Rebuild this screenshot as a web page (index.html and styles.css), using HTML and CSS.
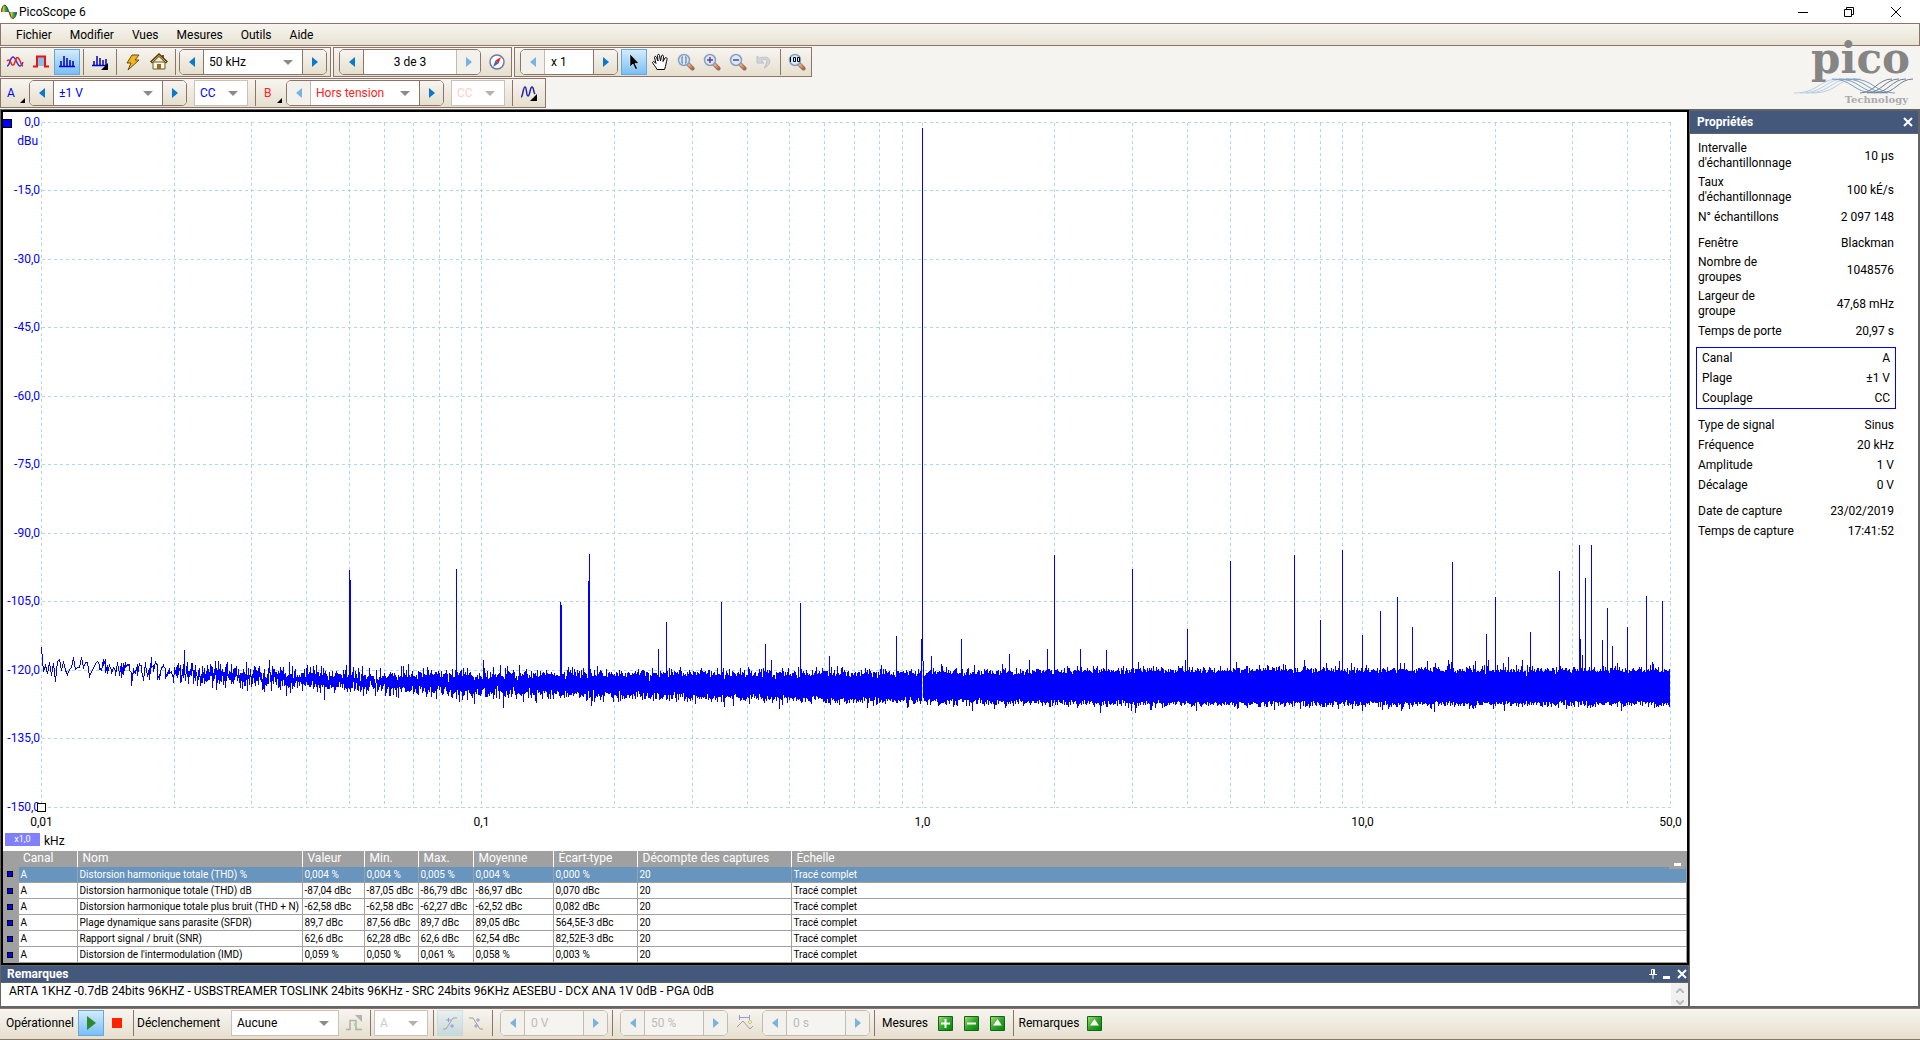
FILE: index.html
```
<!DOCTYPE html>
<html lang="fr">
<head>
    <meta charset="UTF-8">
    <meta name="viewport" content="width=device-width, initial-scale=1.0">
    <title>PicoScope 6</title>
    <link rel="stylesheet" href="styles.css">
</head>
<body>
    <!-- Shared icon shapes -->
    <svg class="defs" width="0" height="0" aria-hidden="true">
        <defs>
            <linearGradient id="handle" x1="0" y1="0" x2="1" y2="1">
                <stop offset="0" stop-color="#f7c27a"/>
                <stop offset="1" stop-color="#c8642a"/>
            </linearGradient>
            <linearGradient id="rainbow">
                <stop offset="0" stop-color="#d22"/>
                <stop offset=".3" stop-color="#cc3"/>
                <stop offset=".6" stop-color="#2a3"/>
                <stop offset="1" stop-color="#24c"/>
            </linearGradient>
            <linearGradient id="green" x1="0" y1="0" x2="1" y2="1">
                <stop offset="0" stop-color="#a4dd70"/>
                <stop offset=".5" stop-color="#2fa52a"/>
                <stop offset="1" stop-color="#008a00"/>
            </linearGradient>
            <symbol id="lens" viewBox="0 0 18 18">
                <path d="M10.500 10.500l5 5" stroke="#7b6a8c" stroke-width="4" stroke-linecap="round"/>
                <path d="M11 11l4.500 4.500" stroke="url(#handle)" stroke-width="2.500" stroke-linecap="round"/>
                <circle cx="7" cy="7" r="5.500" fill="#d3ecfb" stroke="#8a9dc0" stroke-width="1.500"/>
            </symbol>
            <symbol id="left" viewBox="0 0 6 10"><path d="M6 0v10L0 5z" fill="currentColor"/></symbol>
            <symbol id="right" viewBox="0 0 6 10"><path d="M0 0v10l6-5z" fill="currentColor"/></symbol>
            <symbol id="box" viewBox="0 0 15 15">
                <rect x="0" y="0" width="15" height="15" rx="1" fill="#12641a"/>
                <rect x="1" y="1" width="13" height="13" fill="url(#green)"/>
            </symbol>
        </defs>
    </svg>

    <header class="titlebar">
        <svg class="app-icon" viewBox="0 0 16 16" width="16" height="16">
            <path d="M0 8C1 1 3 0 4.500 1S7 5 8 8z" fill="url(#rainbow)"/>
            <path d="M8 8c1 6 2.500 8 4 7s3-3 4-7z" fill="url(#rainbow)"/>
            <path d="M0 8C2-1 5-1 8 8s6 8 8 0" fill="none" stroke="#333" stroke-width=".8"/>
        </svg>
        <h1>PicoScope 6</h1>
        <div class="window-buttons">
            <button aria-label="Réduire"><svg width="10" height="10"><path d="M0 5.500h10" stroke="#000"/></svg></button>
            <button aria-label="Restaurer"><svg width="10" height="10" fill="none" stroke="#000"><path d="M.5 2.500h7v7h-7zM2.500 2V.5h7v7H8"/></svg></button>
            <button aria-label="Fermer"><svg width="10" height="10" stroke="#000"><path d="M0 0l10 10M10 0L0 10"/></svg></button>
        </div>
    </header>

    <nav class="menubar">
        <button>Fichier</button>
        <button>Modifier</button>
        <button>Vues</button>
        <button>Mesures</button>
        <button>Outils</button>
        <button>Aide</button>
    </nav>

    <div class="toolbars">
        <div class="toolbar-rows">
            <div class="toolbar-row">
                <div class="toolbar">
                    <button class="tool" aria-label="Mode oscilloscope"><svg width="18" height="18" viewBox="0 0 18 18" fill="none" stroke-width="1.500"><path d="M1 13c3 0 3-9 6-9s4 9 7 9c2 0 2-2 3-4" stroke="#33d"/><path d="M1 8c2-2 3-1 4 2s3 3 4-1 2-6 4-3 2 7 4 7" stroke="#e22"/></svg></button>
                    <button class="tool" aria-label="Mode persistance"><svg width="18" height="18" viewBox="0 0 18 18"><rect x="6" y="4" width="6" height="9" fill="#7cc4ee"/><path d="M1 13.500h4v-10h8v10h4" fill="none" stroke="#e11" stroke-width="2"/></svg></button>
                    <button class="tool active" aria-label="Mode spectre"><svg width="18" height="18" viewBox="0 0 18 18"><path d="M1 13.500h16M3 13V8M6 13V3M9 13V5M12 13V7M15 13V8" stroke="#00c" stroke-width="1.500"/></svg></button>
                    <span class="sep"></span>
                    <button class="tool" aria-label="Options spectre"><svg width="18" height="18" viewBox="0 0 18 18"><path d="M1 12.500h14M3 12V8M6 12V3M9 12V5M12 12V7M15 12V6" stroke="#00c" stroke-width="1.500"/><path d="M17 10v7h-7z"/></svg></button>
                    <span class="sep"></span>
                    <button class="tool" aria-label="Réglage automatique"><svg width="18" height="18" viewBox="0 0 18 18"><path d="M8 2h7l-4 5h4L4 17l3-7H3z" fill="#f3b61b" stroke="#6b4a12"/></svg></button>
                    <button class="tool" aria-label="Accueil"><svg width="18" height="18" viewBox="0 0 18 18"><path d="M3 9h12v7H3z" fill="#f8f4e2" stroke="#6b5a2a"/><path d="M12 2h2v5h-2z" fill="#b33"/><path d="M1 9.500L9 2l8 7.500" fill="none" stroke="#4d3f18" stroke-width="3"/><path d="M2 9l7-6.500L16 9" fill="none" stroke="#e8c23c"/><path d="M7 11h4v5H7z" fill="#8b6c2a"/></svg></button>
                    <span class="sep"></span>
                    <div class="spinner">
                        <button aria-label="Précédent"><svg width="6" height="10"><use href="#left"/></svg></button>
                        <div class="dropdown w-98"><select aria-label="Gamme de fréquence"><option>50 kHz</option></select></div>
                        <button aria-label="Suivant"><svg width="6" height="10"><use href="#right"/></svg></button>
                    </div>
                </div>
                <div class="toolbar">
                    <div class="spinner">
                        <button aria-label="Tampon précédent"><svg width="6" height="10"><use href="#left"/></svg></button>
                        <input class="w-92 centered" type="text" value="3 de 3" aria-label="Tampon">
                        <button aria-label="Tampon suivant" disabled><svg width="6" height="10"><use href="#right"/></svg></button>
                    </div>
                    <button class="tool" aria-label="Navigateur de tampons"><svg width="16" height="16" viewBox="0 0 16 16"><circle cx="8" cy="8" r="7" fill="#fff" stroke="#6d7aa0" stroke-width="1.500"/><path d="M12 3L9.500 9.500 6.500 6.500z" fill="#e22"/><path d="M4 13l2.500-6.500 3 3z" fill="#36c"/></svg></button>
                </div>
                <div class="toolbar">
                    <div class="spinner">
                        <button aria-label="Zoom précédent" disabled><svg width="6" height="10"><use href="#left"/></svg></button>
                        <input class="w-48" type="text" value="x 1" aria-label="Facteur de zoom">
                        <button aria-label="Zoom suivant"><svg width="6" height="10"><use href="#right"/></svg></button>
                    </div>
                    <button class="tool active" aria-label="Sélection"><svg width="16" height="18" viewBox="0 0 16 18"><path d="M4 1v13l3-3 2.500 5.500 2-1L9 10.500h4z" stroke="#fff" stroke-width=".5"/></svg></button>
                    <button class="tool" aria-label="Main"><svg width="18" height="18" viewBox="0 0 18 18"><path d="M6 16.500C5 14 2 11 1.500 9.500 2 8 3.500 8.500 5 10.500L3.500 4.500c0-1.500 1.500-1.500 2 0L7 8 6.500 2.500c0-1.500 2-1.500 2 0L9.500 8l1-5c.5-1.500 2-1 2 .5L12 8.500l2-3.500c1-1 2.500 0 2 1.500-1 3-1 6-2.500 10z" fill="#fff" stroke="#000"/></svg></button>
                    <button class="tool" aria-label="Zoom sur une zone"><svg width="18" height="18" viewBox="0 0 18 18"><use href="#lens"/><path d="M6 4H5v6h1M8 4h1v6H8" fill="none" stroke="#668"/></svg></button>
                    <button class="tool" aria-label="Zoom avant"><svg width="18" height="18" viewBox="0 0 18 18"><use href="#lens"/><path d="M4 7h6M7 4v6" stroke="#739" stroke-width="1.500"/></svg></button>
                    <button class="tool" aria-label="Zoom arrière"><svg width="18" height="18" viewBox="0 0 18 18"><use href="#lens"/><path d="M4 7h6" stroke="#739" stroke-width="1.500"/></svg></button>
                    <button class="tool" aria-label="Annuler le zoom" disabled><svg width="18" height="18" viewBox="0 0 18 18"><path d="M2 3v7h7L6.500 7.500C11 4 14 8 9 15c8-3 9-14-4.500-10z" fill="#b3bdd2" stroke="#8f9ab4"/></svg></button>
                    <span class="sep"></span>
                    <button class="tool" aria-label="Zoom 100"><svg width="18" height="18" viewBox="0 0 18 18"><use href="#lens"/><path d="M2.500 4v5M5.500 4.500h2v4h-2zM9.500 4.500h2v4h-2z" fill="none" stroke="#000"/></svg></button>
                </div>
            </div>
            <div class="toolbar-row">
                <div class="toolbar">
                    <button class="channel channel-a">A<svg width="5" height="5"><path d="M5 0v5H0z"/></svg></button>
                    <div class="spinner channel-a">
                        <button aria-label="Plage inférieure A"><svg width="6" height="10"><use href="#left"/></svg></button>
                        <div class="dropdown w-108"><select aria-label="Plage A"><option>±1 V</option></select></div>
                        <button aria-label="Plage supérieure A"><svg width="6" height="10"><use href="#right"/></svg></button>
                    </div>
                    <div class="dropdown boxed w-54 channel-a"><select aria-label="Couplage A"><option>CC</option></select></div>
                    <span class="sep"></span>
                    <button class="channel channel-b">B<svg width="5" height="5"><path d="M5 0v5H0z"/></svg></button>
                    <div class="spinner channel-b">
                        <button aria-label="Plage inférieure B" disabled><svg width="6" height="10"><use href="#left"/></svg></button>
                        <div class="dropdown w-108"><select aria-label="Plage B"><option>Hors tension</option></select></div>
                        <button aria-label="Plage supérieure B"><svg width="6" height="10"><use href="#right"/></svg></button>
                    </div>
                    <div class="dropdown boxed off w-54 channel-b"><select aria-label="Couplage B" disabled><option>CC</option></select></div>
                    <span class="sep"></span>
                    <button class="tool" aria-label="Générateur"><svg width="18" height="18" viewBox="0 0 18 18"><path d="M1 13c2 0 2-10 4-10s1 9 3 9 2-9 4-9 1 5 3 7" fill="none" stroke="#22a" stroke-width="1.500"/><path d="M17 10v7h-7z"/></svg></button>
                </div>
            </div>
        </div>
        <div class="logo">
            <span class="logo-name">pico</span>
            <svg class="logo-waves" viewBox="0 0 122 16" width="122" height="16" fill="none">
                <g stroke="#b5cfe6"><path d="M0 15C25 15 25 1 45 1h10"/><path d="M6 15C31 15 31 1 51 1h10"/><path d="M12 15C37 15 37 1 57 1h10"/><path d="M18 15C43 15 43 1 63 1"/></g>
                <g stroke="#7f9cbc"><path d="M38 1c20 0 22 14 42 14"/><path d="M45 1c20 0 22 14 42 14"/><path d="M52 1c20 0 22 14 42 14"/><path d="M59 1c20 0 22 14 42 14"/></g>
                <g stroke="#6c7d97"><path d="M66 15c14 0 18-14 32-14"/><path d="M73 15c14 0 18-14 32-14"/><path d="M80 15c14 0 18-14 32-14"/><path d="M87 15c14 0 18-14 32-14"/></g>
            </svg>
            <span class="logo-sub">Technology</span>
        </div>
    </div>

    <main class="workspace">
        <div class="left-pane">
            <section class="view">
                <div class="plot">
                    <svg id="spectrum" role="img" aria-label="Spectre du canal A"></svg>
                </div>
                <div class="axis-footer">
                    <span class="axis-scale">x1,0</span>
                    <span>kHz</span>
                </div>
                <table class="measurements">
                    <colgroup>
                        <col class="c-mark"><col class="c-canal"><col class="c-nom"><col class="c-valeur"><col class="c-min">
                        <col class="c-max"><col class="c-moyenne"><col class="c-ecart"><col class="c-captures"><col>
                    </colgroup>
                    <thead>
                        <tr><th></th><th>Canal</th><th>Nom</th><th>Valeur</th><th>Min.</th><th>Max.</th><th>Moyenne</th><th>Écart-type</th><th>Décompte des captures</th><th>Échelle</th></tr>
                    </thead>
                    <tbody>
                        <tr class="selected"><td><i></i></td><td>A</td><td>Distorsion harmonique totale (THD) %</td><td>0,004 %</td><td>0,004 %</td><td>0,005 %</td><td>0,004 %</td><td>0,000 %</td><td>20</td><td>Tracé complet</td></tr>
                        <tr><td><i></i></td><td>A</td><td>Distorsion harmonique totale (THD) dB</td><td>-87,04 dBc</td><td>-87,05 dBc</td><td>-86,79 dBc</td><td>-86,97 dBc</td><td>0,070 dBc</td><td>20</td><td>Tracé complet</td></tr>
                        <tr><td><i></i></td><td>A</td><td>Distorsion harmonique totale plus bruit (THD + N)</td><td>-62,58 dBc</td><td>-62,58 dBc</td><td>-62,27 dBc</td><td>-62,52 dBc</td><td>0,082 dBc</td><td>20</td><td>Tracé complet</td></tr>
                        <tr><td><i></i></td><td>A</td><td>Plage dynamique sans parasite (SFDR)</td><td>89,7 dBc</td><td>87,56 dBc</td><td>89,7 dBc</td><td>89,05 dBc</td><td>564,5E-3 dBc</td><td>20</td><td>Tracé complet</td></tr>
                        <tr><td><i></i></td><td>A</td><td>Rapport signal / bruit (SNR)</td><td>62,6 dBc</td><td>62,28 dBc</td><td>62,6 dBc</td><td>62,54 dBc</td><td>82,52E-3 dBc</td><td>20</td><td>Tracé complet</td></tr>
                        <tr><td><i></i></td><td>A</td><td>Distorsion de l'intermodulation (IMD)</td><td>0,059 %</td><td>0,050 %</td><td>0,061 %</td><td>0,058 %</td><td>0,003 %</td><td>20</td><td>Tracé complet</td></tr>
                    </tbody>
                </table>
                <button class="table-min" aria-label="Réduire les mesures"></button>
            </section>

            <section class="notes">
                <div class="panel-title">
                    <h2>Remarques</h2>
                    <button aria-label="Épingler"><svg width="8" height="10" fill="none" stroke="#fff"><path d="M2.500 5V.5h3V5M4.500 1v4M0 5.500h8M4 6v4"/></svg></button>
                    <button aria-label="Réduire"><svg width="8" height="10"><path d="M0 8.500h7" stroke="#fff" stroke-width="3"/></svg></button>
                    <button aria-label="Fermer"><svg width="10" height="10" stroke="#fff" stroke-width="2"><path d="M1 1l8 8M9 1L1 9"/></svg></button>
                </div>
                <div class="notes-body">
                    <textarea aria-label="Remarques" rows="1">ARTA 1KHZ -0.7dB 24bits 96KHZ - USBSTREAMER TOSLINK 24bits 96KHz - SRC 24bits 96KHz AESEBU - DCX ANA 1V 0dB - PGA 0dB</textarea>
                    <div class="notes-scroll">
                        <svg width="8" height="5" fill="none" stroke="#bbb" stroke-width="2"><path d="M0 5l4-4 4 4"/></svg>
                        <svg width="8" height="5" fill="none" stroke="#bbb" stroke-width="2"><path d="M0 0l4 4 4-4"/></svg>
                    </div>
                </div>
            </section>
        </div>

        <aside class="properties">
            <div class="panel-title">
                <h2>Propriétés</h2>
                <button aria-label="Fermer"><svg width="10" height="10" stroke="#fff" stroke-width="2"><path d="M1 1l8 8M9 1L1 9"/></svg></button>
            </div>
            <div class="props">
                <dl>
                    <div><dt>Intervalle d'échantillonnage</dt><dd>10 µs</dd></div>
                    <div><dt>Taux d'échantillonnage</dt><dd>100 kÉ/s</dd></div>
                    <div><dt>N° échantillons</dt><dd>2 097 148</dd></div>
                </dl>
                <dl>
                    <div><dt>Fenêtre</dt><dd>Blackman</dd></div>
                    <div><dt>Nombre de groupes</dt><dd>1048576</dd></div>
                    <div><dt>Largeur de groupe</dt><dd>47,68 mHz</dd></div>
                    <div><dt>Temps de porte</dt><dd>20,97 s</dd></div>
                </dl>
                <dl class="channel-box">
                    <div><dt>Canal</dt><dd>A</dd></div>
                    <div><dt>Plage</dt><dd>±1 V</dd></div>
                    <div><dt>Couplage</dt><dd>CC</dd></div>
                </dl>
                <dl>
                    <div><dt>Type de signal</dt><dd>Sinus</dd></div>
                    <div><dt>Fréquence</dt><dd>20 kHz</dd></div>
                    <div><dt>Amplitude</dt><dd>1 V</dd></div>
                    <div><dt>Décalage</dt><dd>0 V</dd></div>
                </dl>
                <dl>
                    <div><dt>Date de capture</dt><dd>23/02/2019</dd></div>
                    <div><dt>Temps de capture</dt><dd>17:41:52</dd></div>
                </dl>
            </div>
        </aside>
    </main>

    <footer class="statusbar">
        <span class="label w-68">Opérationnel</span>
        <button class="tool active" aria-label="Démarrer"><svg width="9" height="14"><path d="M0 0v14l9-7z" fill="#2c8a2c"/></svg></button>
        <button class="tool" aria-label="Arrêter"><svg width="10" height="10"><path d="M0 0h10v10H0z" fill="#f20"/></svg></button>
        <span class="sep"></span>
        <label class="label w-90" for="trigger">Déclenchement</label>
        <div class="dropdown boxed w-108"><select id="trigger"><option>Aucune</option></select></div>
        <button class="tool" aria-label="Déclenchement avancé" disabled><svg width="18" height="18" viewBox="0 0 18 18"><path d="M1 15.500h4v-9h6v9h6" fill="none" stroke="#777" stroke-width="1.500"/><path d="M10 1h7v7z" fill="#777"/><path d="M9 9h3v3H9z" fill="#4d4"/></svg></button>
        <span class="sep"></span>
        <div class="dropdown boxed off w-54"><select aria-label="Source de déclenchement" disabled><option>A</option></select></div>
        <span class="sep"></span>
        <button class="tool active" aria-label="Front montant" disabled><svg width="16" height="16" viewBox="0 0 16 16" fill="none"><path d="M1 14h3l7-11h4" stroke="#555"/><path d="M4 5h5M6.500 3v4M8 11h4M10 9v4" stroke="#44d"/></svg></button>
        <button class="tool" aria-label="Front descendant" disabled><svg width="16" height="16" viewBox="0 0 16 16" fill="none"><path d="M1 3h4l7 11h3" stroke="#555"/><path d="M8 5h4M10 3v4M6 11h4M8 9v4" stroke="#44d"/></svg></button>
        <span class="sep"></span>
        <div class="spinner">
            <button aria-label="Diminuer le seuil" disabled><svg width="6" height="10"><use href="#left"/></svg></button>
            <input class="w-58" type="text" value="0 V" aria-label="Seuil" disabled>
            <button aria-label="Augmenter le seuil" disabled><svg width="6" height="10"><use href="#right"/></svg></button>
        </div>
        <span class="sep"></span>
        <div class="spinner">
            <button aria-label="Diminuer le pré-déclenchement" disabled><svg width="6" height="10"><use href="#left"/></svg></button>
            <input class="w-58" type="text" value="50 %" aria-label="Pré-déclenchement" disabled>
            <button aria-label="Augmenter le pré-déclenchement" disabled><svg width="6" height="10"><use href="#right"/></svg></button>
        </div>
        <button class="tool" aria-label="Retard" disabled><svg width="18" height="16" viewBox="0 0 18 16" fill="none"><path d="M1 12l6-6 7 8 3-3" stroke="#555"/><path d="M3 2.500h11M3.500 0v5M13.500 0v5" stroke="#44d"/><path d="M14 5l2 2-2 2-2-2z" stroke="#b90"/></svg></button>
        <div class="spinner">
            <button aria-label="Diminuer le retard" disabled><svg width="6" height="10"><use href="#left"/></svg></button>
            <input class="w-58" type="text" value="0 s" aria-label="Retard" disabled>
            <button aria-label="Augmenter le retard" disabled><svg width="6" height="10"><use href="#right"/></svg></button>
        </div>
        <span class="sep"></span>
        <span class="label centered w-54">Mesures</span>
        <button class="tool" aria-label="Ajouter une mesure"><svg width="15" height="15"><use href="#box"/><path d="M3 7.500h9M7.500 3v9" stroke="#fff" stroke-width="2"/></svg></button>
        <button class="tool" aria-label="Supprimer une mesure"><svg width="15" height="15"><use href="#box"/><path d="M3 7.500h9" stroke="#fff" stroke-width="2"/></svg></button>
        <button class="tool" aria-label="Modifier une mesure"><svg width="15" height="15"><use href="#box"/><path d="M7.500 3L12 9.500H3z" fill="#fff"/></svg></button>
        <span class="sep"></span>
        <span class="label centered w-64">Remarques</span>
        <button class="tool" aria-label="Afficher les remarques"><svg width="15" height="15"><use href="#box"/><path d="M7.500 3L12 9.500H3z" fill="#fff"/></svg></button>
    </footer>

    <script src="spectrum.js"></script>
</body>
</html>
```
FILE: styles.css
```
* {
    box-sizing: border-box;
}

body {
    margin: 0;
    height: 100vh;
    display: flex;
    flex-direction: column;
    font-family: Roboto, "Open Sans", sans-serif;
    font-size: 12px;
    line-height: 16px;
    color: #000;
    background: #f6f4f0;
    overflow: hidden;
}

button,
input,
select,
textarea {
    font: inherit;
    color: inherit;
    border: 0;
    margin: 0;
    padding: 0;
    background: none;
    border-radius: 0;
}

h1,
h2,
dl,
dd {
    margin: 0;
    font-size: 12px;
}

svg {
    display: block;
}

.defs {
    position: absolute;
}

/* Title bar */
.titlebar {
    display: flex;
    align-items: center;
    height: 23px;
    padding-left: 1px;
    gap: 2px;
    background: #fff;
}

.titlebar h1 {
    font-weight: normal;
}

.window-buttons {
    display: flex;
    margin-left: auto;
}

.window-buttons button {
    width: 46px;
    height: 22px;
    display: grid;
    place-items: center;
}

.window-buttons button:last-child {
    width: 48px;
}

/* Menu */
.menubar {
    display: flex;
    height: 23px;
    padding-left: 6px;
    border: 1px solid #8c7468;
    background: linear-gradient(#f7f5f1, #e8e2d1);
}

.menubar button {
    padding: 0 9px;
}

/* Toolbars */
.toolbars {
    display: flex;
    justify-content: space-between;
    height: 63px;
    padding-top: 1px;
}

.toolbar-row {
    display: flex;
    gap: 2px;
    height: 30px;
    margin-bottom: 1px;
}

.toolbar {
    display: flex;
    align-items: center;
    padding: 0 3px 0 1px;
    border: 1px solid #8c7468;
    background: linear-gradient(#f7f5f1, #e6dfcd);
}

.toolbar + .toolbar {
    padding: 0 1px 0 5px;
}

.tool {
    width: 26px;
    height: 26px;
    display: grid;
    place-items: center;
}

.tool.active {
    border: 1px solid #66a7e0;
    background: linear-gradient(#d3ebfc, #79bff8);
}

.tool:disabled {
    opacity: 0.5;
}

.tool.active:disabled {
    border-color: #a9cfe6;
    background: linear-gradient(#dcecf2, #a8d0e2);
}

.sep {
    width: 1px;
    height: 26px;
    margin: 0 3px;
    background: #8c7468;
}

.spinner {
    display: flex;
    height: 26px;
    border: 1px solid #8c7468;
    border-radius: 5px;
    background: #fff;
    overflow: hidden;
}

.spinner + .tool {
    margin-left: 3px;
}

.spinner button {
    width: 24px;
    display: grid;
    place-items: center;
    color: #0a78cc;
    background: linear-gradient(#f7f5f1, #e6dfcd);
}

.spinner button:first-child {
    border-right: 1px solid #8c7468;
}

.spinner button:last-child {
    border-left: 1px solid #8c7468;
}

.spinner button:disabled {
    color: #7ab4de;
    border-color: #c4bab2;
    background: #f3f1ec;
}

.spinner input {
    padding: 0 6px;
}

.spinner input.centered,
.label.centered {
    text-align: center;
}

.spinner input:disabled {
    color: #bbb;
    background: #f6f4f1;
}

.spinner:has(input:disabled) {
    border-color: #c4bab2;
}

.dropdown {
    position: relative;
    background: #fff;
}

.dropdown select {
    appearance: none;
    width: 100%;
    height: 100%;
    padding: 0 5px;
}

.dropdown::after {
    content: "";
    position: absolute;
    right: 9px;
    top: 50%;
    margin-top: -2px;
    border: 5px solid transparent;
    border-top-color: #8b8b8b;
    border-bottom: 0;
    pointer-events: none;
}

.dropdown.boxed {
    height: 26px;
    border: 1px solid #c9c1ba;
}

.dropdown.off::after {
    border-top-color: #b8b0ac;
}

.dropdown.off select {
    color: #ccc;
    opacity: 1;
}

.channel {
    width: 27px;
    height: 26px;
    padding: 0 4px 0 5px;
    display: flex;
    align-items: center;
    justify-content: space-between;
}

.channel svg {
    align-self: flex-end;
    margin-bottom: 3px;
    fill: #000;
}

.channel-a {
    color: #00f;
}

.channel-b {
    color: #f22;
}

.dropdown.off.channel-b select {
    color: #fcc;
}

.toolbar .boxed {
    margin: 0 4px 0 7px;
}

.w-48 { width: 48px; }
.w-54 { width: 54px; }
.w-58 { width: 58px; }
.w-64 { width: 64px; }
.w-68 { width: 68px; }
.w-90 { width: 90px; }
.w-92 { width: 92px; }
.w-98 { width: 98px; }
.w-108 { width: 108px; }

/* Logo */
.logo {
    position: relative;
    width: 122px;
    margin-right: 4px;
    font-family: "DejaVu Serif", serif;
    text-align: right;
}

.logo-name {
    position: absolute;
    right: 6px;
    top: -10px;
    font-size: 42px;
    font-weight: bold;
    line-height: 44px;
    color: #858585;
}

.logo-waves {
    position: absolute;
    left: 0;
    top: 31px;
}

.logo-sub {
    position: absolute;
    right: 8px;
    top: 45px;
    font-size: 10px;
    font-weight: bold;
    line-height: 16px;
    color: #aaa;
}

/* Workspace */
.workspace {
    flex: 1;
    min-height: 0;
    display: flex;
    border-top: 1px solid #646464;
    background: #646464;
}

.left-pane {
    flex: 1;
    min-width: 0;
    display: flex;
    flex-direction: column;
    padding-left: 1px;
}

.view {
    position: relative;
    flex: 1;
    min-height: 0;
    display: flex;
    flex-direction: column;
    border: 2px solid #000;
    background: #fff;
}

.plot {
    flex: 1;
    min-height: 0;
}

#spectrum {
    width: 100%;
    height: 100%;
}

#spectrum text {
    font-size: 12px;
}

#spectrum .y-label {
    fill: #00f;
    text-anchor: end;
}

#spectrum .x-label {
    fill: #000;
    text-anchor: middle;
}

#spectrum path {
    fill: none;
    shape-rendering: crispEdges;
}

#spectrum .grid {
    stroke: #add8e6;
    stroke-dasharray: 3 3;
}

#spectrum .trace {
    stroke: #00f;
}

.axis-footer {
    display: flex;
    gap: 4px;
    height: 18px;
    padding-left: 2px;
}

.axis-scale {
    width: 35px;
    height: 13px;
    font-size: 9px;
    line-height: 13px;
    text-align: center;
    color: #fff;
    background: #8080ff;
}

.measurements {
    width: 100%;
    table-layout: fixed;
    border-collapse: collapse;
    font-size: 10px;
    line-height: 15px;
}

.measurements th {
    height: 16px;
    padding: 0 5px;
    border-right: 1px solid #fff;
    font-size: 12px;
    font-weight: normal;
    text-align: left;
    color: #fff;
    background: #a0a0a0;
}

.measurements th:first-child,
.measurements th:last-child {
    border-right: 0;
}

.measurements td {
    height: 16px;
    padding: 0 2px;
    border-right: 1px solid #a0a0a0;
    border-bottom: 1px solid #a0a0a0;
    white-space: nowrap;
}

.measurements td:first-child {
    padding: 0 5px;
    background: #a0a0a0;
}

.measurements i {
    display: block;
    width: 4px;
    height: 4px;
    background: #00f;
    outline: 1px solid #000;
}

.measurements .selected td:not(:first-child) {
    color: #fff;
    background: #6795bd;
}

.c-mark { width: 15px; }
.c-canal { width: 59px; }
.c-nom { width: 225px; }
.c-valeur { width: 62px; }
.c-min { width: 54px; }
.c-max { width: 55px; }
.c-moyenne { width: 80px; }
.c-ecart { width: 84px; }
.c-captures { width: 154px; }

.table-min {
    position: absolute;
    right: 2px;
    bottom: 94px;
    width: 16px;
    height: 8px;
    background: linear-gradient(#fff, #fff) 5px 2px / 7px 3px no-repeat #a0a0a0;
}

/* Panels */
.panel-title {
    display: flex;
    align-items: center;
    color: #fff;
    background: #44587c;
}

.panel-title h2 {
    flex: 1;
}

.notes {
    padding: 1px 1px 2px 0;
}

.notes .panel-title {
    height: 16px;
    padding: 0 1px 0 6px;
    gap: 6px;
}

.notes-body {
    display: flex;
    height: 23px;
    margin-top: 1px;
    background: #fff;
}

.notes-body textarea {
    flex: 1;
    padding: 0 8px;
    resize: none;
    overflow: hidden;
    outline: 0;
}

.notes-scroll {
    display: flex;
    flex-direction: column;
    justify-content: space-between;
    align-items: center;
    width: 17px;
    padding: 5px 0 1px;
    background: #f0f0f0;
}

.properties {
    width: 231px;
    display: flex;
    flex-direction: column;
    padding: 1px 2px 2px 1px;
}

.properties .panel-title {
    height: 22px;
    padding: 0 5px 0 7px;
}

.props {
    flex: 1;
    display: flex;
    flex-direction: column;
    gap: 6px;
    margin-top: 1px;
    padding: 5px 22px 0 6px;
    font-size: 11px;
    line-height: 15px;
    background: #fff;
}

.props dl > div {
    display: flex;
    align-items: center;
    justify-content: space-between;
    min-height: 20px;
    padding: 2px;
}

.props dt {
    width: 96px;
}

.channel-box {
    border: 1px solid #00f;
    padding: 0 3px;
}

/* Status bar */
.statusbar {
    display: flex;
    align-items: center;
    height: 32px;
    padding: 0 6px 2px;
    border: solid #8c7468;
    border-width: 1px 0;
    background: linear-gradient(#f7f5f1, #e6dfcd);
}

.statusbar .label {
    margin-right: 4px;
    white-space: nowrap;
}

.statusbar .label.centered {
    margin-right: 0;
}

.statusbar .boxed {
    margin-right: 2px;
}

.statusbar .spinner {
    margin: 0 1px 0 4px;
}
```
FILE: spectrum.js
```
const svg = document.getElementById('spectrum');

// Plot area margins inside the view
const margin = { left: 38, right: 17, top: 10, bottom: 26 };
const minHz = 10;
const maxHz = 50000;
const minDb = -150;

// Spectral peaks: [frequency in Hz, level in dBu]
const peaks = [
    [50, -97.9], [50.3, -100.1], [87.7, -97.7], [100.9, -117.8], [151, -105], [151.8, -105.7],
    [174.8, -100.3], [175.6, -94.4], [252.3, -115.4], [263.2, -109.3], [350.4, -105.1], [439.4, -114.1],
    [454.6, -117.6], [527.9, -105.3], [614.3, -116.9], [875.2, -112.5], [996, -113.2], [1000, -1.2],
    [1006, -118], [1051, -116.9], [1228, -113], [1580, -116.3], [1755, -117.6], [1927, -115.2],
    [2000, -94.6], [2282, -115.2], [2626, -115.6], [3000, -97.7], [3960, -117.8], [4000, -111],
    [5000, -96.1], [5177, -118.2], [7000, -94.6], [7373, -117.8], [8000, -109], [9000, -93.7],
    [10000, -112.3], [11000, -106.9], [12000, -103.8], [13000, -110.4], [15687, -117.8], [16000, -96.3],
    [18050, -118], [19134, -112.1], [19323, -117.8], [20000, -104], [21454, -117.1], [23087, -117.6],
    [24000, -111.5], [28000, -98.3], [31000, -92.6], [31300, -113.2], [31600, -116.7], [32107, -99.8],
    [33131, -92.6], [35000, -113.4], [36000, -106.4], [37000, -114.7], [40000, -110.4], [44000, -103.6],
    [48000, -104.7]
];

// Noise floor: [frequency in Hz, mean level in dBu]
const floor = [[10, -119.4], [15, -119.4], [23, -121], [50, -122.5], [100, -123], [1000, -123.7], [50000, -123.7]];

let seed = 1;
function random() {
    seed = (seed * 16807) % 2147483647;
    return seed / 2147483647;
}

function gauss() {
    return Math.sqrt(-2 * Math.log(random())) * Math.cos(2 * Math.PI * random());
}

function floorAt(hz) {
    for (let i = 1; i < floor.length; i++) {
        const [f0, l0] = floor[i - 1];
        const [f1, l1] = floor[i];
        if (hz <= f1) {
            return l0 + (l1 - l0) * Math.log(hz / f0) / Math.log(f1 / f0);
        }
    }
    return floor[floor.length - 1][1];
}

function draw() {
    const width = svg.clientWidth;
    const height = svg.clientHeight;
    const plotW = width - margin.left - margin.right;
    const plotH = height - margin.top - margin.bottom;
    const decades = Math.log10(maxHz / minHz);
    const x = hz => Math.round(margin.left + plotW * Math.log10(hz / minHz) / decades) + 0.5;
    const y = db => Math.floor(margin.top + plotH * db / minDb) + 0.5;
    seed = 1;

    let grid = '';
    let labels = '';
    for (let db = 0; db >= minDb; db -= 15) {
        grid += `<path class="grid" d="M${x(minHz)} ${y(db)}H${x(maxHz)}"/>`;
        labels += `<text class="y-label" x="${margin.left - 1}" y="${y(db) + 3.5}">${db.toFixed(1).replace('.', ',')}</text>`;
    }
    labels += `<text class="y-label" x="${margin.left - 3}" y="${y(0) + 22.5}">dBu</text>`;
    for (let decade = minHz; decade < maxHz; decade *= 10) {
        for (let n = 1; n < 10 && n * decade <= maxHz; n++) {
            grid += `<path class="grid" d="M${x(n * decade)} ${y(0)}V${y(minDb)}"/>`;
        }
    }
    [[10, '0,01'], [100, '0,1'], [1000, '1,0'], [10000, '10,0'], [50000, '50,0']].forEach(([hz, label]) => {
        labels += `<text class="x-label" x="${x(hz)}" y="${y(minDb) + 18.5}">${label}</text>`;
    });

    // One column per pixel, from the highest to the lowest bin that falls in it
    let trace = '';
    const gap = x(1000);
    for (let px = x(minHz); px < x(maxHz); px++) {
        const hz = minHz * Math.pow(10, (px - x(minHz)) / plotW * decades);
        if (hz < 20 && Math.floor(px) % 2) {
            continue;
        }
        const bins = Math.min(400, Math.max(1, Math.round(hz / 9)));
        const spread = bins < 3 ? 1.3 : 1.25;
        let high = -200;
        let low = 0;
        for (let i = 0; i < bins; i++) {
            const level = floorAt(hz) + gauss() * spread;
            high = Math.max(high, level);
            low = Math.min(low, level);
        }
        // leakage notch under the fundamental
        if (px === gap) {
            trace += `M${px + 1} ${y(-124)}`;
            continue;
        }
        trace += `${trace ? 'L' : 'M'}${px} ${y(high)}V${y(low)}`;
    }
    peaks.forEach(([hz, db]) => {
        trace += `M${x(hz)} ${y(db)}V${y(hz === 1000 ? -118 : -123)}`;
    });

    svg.innerHTML = grid + labels +
        `<path class="trace" d="${trace}"/>` +
        `<rect x="0" y="${y(0) - 3.5}" width="9" height="9" fill="#000"/><rect x="0" y="${y(0) - 2.5}" width="8" height="7" fill="#00f"/>` +
        `<rect x="${x(minHz) - 4}" y="${y(minDb) - 4}" width="8" height="8" fill="#fff" stroke="#000"/>`;
}

draw();
window.addEventListener('resize', draw);
```
